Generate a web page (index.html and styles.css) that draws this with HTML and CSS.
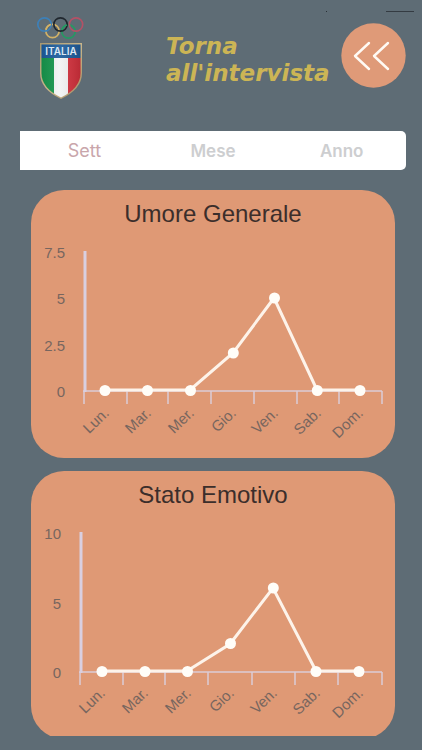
FILE: index.html
```html
<!DOCTYPE html>
<html lang="it">
<head>
<meta charset="utf-8">
<meta name="viewport" content="width=device-width, initial-scale=1">
<title>Statistiche</title>
<link rel="stylesheet" href="styles.css">
</head>
<body>
<div class="status"><span class="status-dot"></span><span class="status-line"></span></div>
<header class="header">
  <svg class="logo" viewBox="0 0 50 86" role="img" aria-label="Italia">
    <defs>
      <clipPath id="shield"><path d="M6.500 28.500H45.500V57Q45.500 72 26 81.500Q6.500 72 6.500 57Z"/></clipPath>
      <linearGradient id="gold" x1="0" y1="0" x2="1" y2="1">
        <stop offset="0" stop-color="#a89870"/><stop offset=".5" stop-color="#c9b68a"/><stop offset="1" stop-color="#a58a60"/>
      </linearGradient>
      <linearGradient id="shade" x1="0" y1="0" x2="1" y2="0">
        <stop offset="0" stop-color="#000" stop-opacity=".08"/><stop offset=".45" stop-color="#fff" stop-opacity=".08"/><stop offset="1" stop-color="#000" stop-opacity=".12"/>
      </linearGradient>
    </defs>
    <g fill="none" stroke-width="1.7">
      <circle cx="17.500" cy="15" r="6.700" stroke="#d3b266"/>
      <circle cx="33.500" cy="15.500" r="6.700" stroke="#249a62"/>
      <circle cx="9.500" cy="8.500" r="6.700" stroke="#3d80b8"/>
      <circle cx="25.500" cy="8.500" r="6.700" stroke="#20272e"/>
      <circle cx="41" cy="8.500" r="6.700" stroke="#b45166"/>
      <path d="M11 13.500A6.700 6.700 0 0 1 16 8.500" stroke="#d3b266"/>
      <path d="M27 14A6.700 6.700 0 0 1 32 9" stroke="#249a62"/>
    </g>
    <path d="M5 27H47V57Q47 73 26 83Q5 73 5 57Z" fill="url(#gold)"/>
    <g clip-path="url(#shield)">
      <rect x="6" y="28" width="40" height="14" fill="#1c5b9b"/>
      <rect x="6" y="42" width="13" height="42" fill="#16964c"/>
      <rect x="19" y="42" width="14" height="42" fill="#f3f4f4"/>
      <rect x="33" y="42" width="14" height="42" fill="#d22f3b"/>
      <rect x="6" y="28" width="40" height="55" fill="url(#shade)"/>
    </g>
    <text class="logo-text" x="26" y="39" text-anchor="middle">ITALIA</text>
  </svg>
  <a class="back" href="#">
    <span class="back-label">Torna all'intervista</span>
    <svg class="back-icon" viewBox="0 0 65 65" aria-hidden="true">
      <circle cx="32.500" cy="32.500" r="32.200" fill="#df9a78"/>
      <path d="M28 20L14 33L28 46M47 20L33 33L47 46" fill="none" stroke="#fffaf4" stroke-width="2.400" stroke-linecap="round" stroke-linejoin="round"/>
    </svg>
  </a>
</header>

<nav class="tabs">
  <button class="tab active" type="button">Sett</button>
  <button class="tab" type="button">Mese</button>
  <button class="tab" type="button">Anno</button>
</nav>

<main class="cards">
  <section class="card">
    <h2 class="card-title">Umore Generale</h2>
    <svg class="chart" viewBox="0 0 364 222" role="img" aria-label="Umore Generale">
      <path class="axis-x" d="M52 155H351M53 155V168M96 155V168M137 155V168M180 155V168M223 155V168M266 155V168M308 155V168M351 155V168"/>
      <path class="axis-y" d="M54 15V156"/>
      <polyline class="line" points="74,154 116,154 159,154 202,117 243,62 286,154 329,154"/>
      <g class="dots">
        <circle cx="74" cy="154.500" r="5.500"/><circle cx="116.500" cy="154.500" r="5.500"/><circle cx="159.500" cy="154.500" r="5.500"/><circle cx="202.300" cy="117" r="5.500"/><circle cx="243.500" cy="62" r="5.500"/><circle cx="286.300" cy="154.500" r="5.500"/><circle cx="329" cy="154.500" r="5.500"/>
      </g>
      <g class="label">
        <text x="34" y="22">7.5</text><text x="34" y="68">5</text><text x="34" y="115">2.5</text><text x="34" y="161">0</text>
        <text transform="translate(79 178) rotate(-44)">Lun.</text>
        <text transform="translate(121 178) rotate(-44)">Mar.</text>
        <text transform="translate(164 178) rotate(-44)">Mer.</text>
        <text transform="translate(206 178) rotate(-44)">Gio.</text>
        <text transform="translate(248 178) rotate(-44)">Ven.</text>
        <text transform="translate(291 178) rotate(-44)">Sab.</text>
        <text transform="translate(333 178) rotate(-44)">Dom.</text>
      </g>
    </svg>
  </section>

  <section class="card">
    <h2 class="card-title">Stato Emotivo</h2>
    <svg class="chart" viewBox="0 0 364 222" role="img" aria-label="Stato Emotivo">
      <path class="axis-x" d="M48 155H351M49 155V168M92 155V168M134 155V168M177 155V168M221 155V168M264 155V168M307 155V168M351 155V168"/>
      <path class="axis-y" d="M50 15V156"/>
      <polyline class="line" points="71,154 114,154 156,154 199,127 242,71 285,154 328,154"/>
      <g class="dots">
        <circle cx="71" cy="154.500" r="5.500"/><circle cx="114" cy="154.500" r="5.500"/><circle cx="156.500" cy="154.500" r="5.500"/><circle cx="199.500" cy="126.500" r="5.500"/><circle cx="242.300" cy="71" r="5.500"/><circle cx="285" cy="154.500" r="5.500"/><circle cx="328" cy="154.500" r="5.500"/>
      </g>
      <g class="label">
        <text x="30" y="22">10</text><text x="30" y="92">5</text><text x="30" y="161">0</text>
        <text transform="translate(75 177) rotate(-44)">Lun.</text>
        <text transform="translate(118 177) rotate(-44)">Mar.</text>
        <text transform="translate(161 177) rotate(-44)">Mer.</text>
        <text transform="translate(204 177) rotate(-44)">Gio.</text>
        <text transform="translate(247 177) rotate(-44)">Ven.</text>
        <text transform="translate(290 177) rotate(-44)">Sab.</text>
        <text transform="translate(333 177) rotate(-44)">Dom.</text>
      </g>
    </svg>
  </section>
</main>
</body>
</html>
```
FILE: styles.css
```css
* {
  box-sizing: border-box;
}

body {
  display: flex;
  flex-direction: column;
  height: 100vh;
  margin: 0;
  padding-bottom: 14px;
  background: #5e6c75;
  font-family: "Liberation Sans", Arial, sans-serif;
}

.status {
  display: flex;
  flex: none;
  align-items: flex-end;
  justify-content: flex-end;
  gap: 59px;
  height: 12px;
  padding-right: 8px;
}

.status-dot {
  width: 1px;
  height: 1px;
  background: #2a3036;
}

.status-line {
  width: 28px;
  height: 1px;
  background: #343b42;
}

.header {
  display: flex;
  flex: none;
  align-items: flex-start;
  justify-content: space-between;
  height: 119px;
  padding: 4px 16px 0 35px;
}

.logo {
  flex: none;
  width: 50px;
  height: 86px;
}

.logo-text {
  fill: #dce8f2;
  font: 600 10px Inter, sans-serif;
}

.back {
  display: flex;
  gap: 10px;
  padding-top: 7px;
  text-decoration: none;
}

.back-label {
  width: 165px;
  padding-top: 10px;
  color: #ccb555;
  font: italic bold 23px/27px "DejaVu Sans", Verdana, sans-serif;
}

.back-icon {
  flex: none;
  width: 65px;
  height: 65px;
}

.tabs {
  display: flex;
  flex: none;
  height: 39px;
  margin: 0 16px 20px 20px;
  border-radius: 0 5px 5px 0;
  background: #fff;
}

.tab {
  flex: 1;
  padding: 0;
  border: 0;
  background: none;
  color: #cdced0;
  font: 600 17px/20px Inter, sans-serif;
}

.tab.active {
  color: #c9a6ab;
  font-size: 18px;
  font-weight: 400;
}

.cards {
  display: flex;
  flex: 1;
  flex-direction: column;
  gap: 13px;
  min-height: 0;
  padding: 0 27px 0 31px;
  overflow-y: auto;
  scrollbar-width: none;
}

.card {
  flex: none;
  border-radius: 33px;
  background: #df9975;
}

.card-title {
  height: 46px;
  margin: 0;
  padding-top: 10px;
  color: #3b2e2b;
  font-size: 24px;
  font-weight: 400;
  line-height: 28px;
  text-align: center;
}

.chart {
  display: block;
  width: 100%;
}

.axis-x,
.axis-y,
.line {
  fill: none;
}

.axis-x {
  stroke: #dccbd6;
  stroke-width: 1.5px;
}

.axis-y {
  stroke: #d9cfe0;
  stroke-width: 3px;
}

.line {
  stroke: #fdf3ea;
  stroke-width: 3px;
}

.dots {
  fill: #fffdf8;
}

.label {
  fill: #77665f;
  font-size: 15px;
  text-anchor: end;
}
```
